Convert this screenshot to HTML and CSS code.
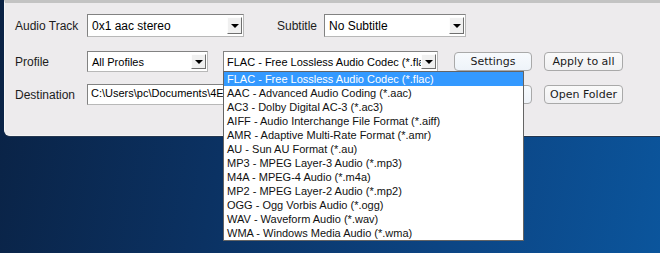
FILE: index.html
```html
<!DOCTYPE html>
<html lang="en">
<head>
  <meta charset="UTF-8">
  <title>Output Settings</title>
  <link rel="stylesheet" href="styles.css">
</head>
<body>

<div class="desktop">
  <div class="window">

    <!-- Audio / subtitle -->
    <div class="row row-first">
      <span class="label">Audio Track</span>
      <div class="combo combo-audio">
        <span class="combo-text">0x1 aac stereo</span>
        <span class="combo-arrow"></span>
      </div>
      <span class="label label-sub">Subtitle</span>
      <div class="combo combo-sub">
        <span class="combo-text">No Subtitle</span>
        <span class="combo-arrow"></span>
      </div>
    </div>

    <!-- Profile -->
    <div class="row row-profile">
      <span class="label">Profile</span>
      <div class="combo combo-small combo-profile">
        <span class="combo-text">All Profiles</span>
        <span class="combo-arrow"></span>
      </div>
      <div class="combo combo-format">
        <span class="combo-text">FLAC - Free Lossless Audio Codec (*.flac)</span>
        <span class="combo-arrow"></span>

        <ul class="dropdown">
          <li class="selected">FLAC - Free Lossless Audio Codec (*.flac)</li>
          <li>AAC - Advanced Audio Coding (*.aac)</li>
          <li>AC3 - Dolby Digital AC-3 (*.ac3)</li>
          <li>AIFF - Audio Interchange File Format (*.aiff)</li>
          <li>AMR - Adaptive Multi-Rate Format (*.amr)</li>
          <li>AU - Sun AU Format (*.au)</li>
          <li>MP3 - MPEG Layer-3 Audio (*.mp3)</li>
          <li>M4A - MPEG-4 Audio (*.m4a)</li>
          <li>MP2 - MPEG Layer-2 Audio (*.mp2)</li>
          <li>OGG - Ogg Vorbis Audio (*.ogg)</li>
          <li>WAV - Waveform Audio (*.wav)</li>
          <li>WMA - Windows Media Audio (*.wma)</li>
        </ul>
      </div>
      <button class="btn btn-settings">Settings</button>
      <button class="btn btn-apply">Apply to all</button>
    </div>

    <!-- Destination -->
    <div class="row row-dest">
      <span class="label">Destination</span>
      <div class="textbox">C:\Users\pc\Documents\4Easysoft Studio\Output</div>
      <button class="btn btn-browse">Browse...</button>
      <button class="btn btn-open">Open Folder</button>
    </div>

  </div>
</div>

</body>
</html>
```

FILE: styles.css
```css
body {
  margin: 0;
  padding: 0;
  font-family: "Liberation Sans", Arial, sans-serif;
}

.desktop {
  width: 660px;
  height: 253px;
  overflow: hidden;
  background: linear-gradient(100deg, #0a2244 0%, #0b3263 35%, #0c4584 70%, #0b559c 100%);
}

.window {
  margin-left: 4px;
  height: 121px;
  padding: 11px 0 0 10px;
  background-color: #edebed;
  border-top: 3px solid #c3c3c3;
  border-left: 1px solid #f7f7f7;
  border-bottom: 1px solid #f5f5f5;
  border-bottom-left-radius: 6px;
  box-shadow: 0 1px 0 #24364f;
}

.row {
  display: flex;
  align-items: center;
}

.row-first {
  height: 23px;
}

.row-profile {
  height: 21px;
  margin-top: 14px;
}

.row-dest {
  height: 21px;
  margin-top: 12px;
}

.label {
  width: 72px;
  font-size: 12px;
  color: #1c1c1c;
}

.label-sub {
  width: 47px;
  margin-left: 33px;
}

/* combo boxes */
.combo {
  position: relative;
  box-sizing: border-box;
  height: 100%;
  display: flex;
  align-items: center;
  background-color: white;
  border: 1px solid #828282;
  border-right-color: #b8b8b8;
  border-bottom-color: #b8b8b8;
  font-size: 12px;
  color: black;
}

.combo-text {
  flex: 1;
  padding-left: 4px;
  white-space: nowrap;
  overflow: hidden;
}

.combo-arrow {
  position: relative;
  box-sizing: border-box;
  width: 15px;
  height: calc(100% - 4px);
  margin-right: 1px;
  background-color: #f0f0f0;
  border: 1px solid #fdfdfd;
  border-right-color: #6f6f6f;
  border-bottom-color: #6f6f6f;
}

.combo-arrow::after {
  content: "";
  position: absolute;
  left: 3px;
  top: 50%;
  margin-top: -2px;
  border-left: 4px solid transparent;
  border-right: 4px solid transparent;
  border-top: 4px solid black;
}

.combo-audio {
  width: 157px;
}

.combo-sub {
  width: 142px;
}

.combo-small {
  font-size: 11px;
}

.combo-profile {
  width: 121px;
}

.combo-format {
  width: 215px;
  margin-left: 15px;
  font-size: 11px;
}

.combo-format .combo-text {
  padding-left: 3px;
  text-overflow: clip;
}

/* open list of the format combo */
.dropdown {
  position: absolute;
  top: 100%;
  left: -1px;
  z-index: 2;
  width: 299px;
  margin: 0;
  padding: 0;
  list-style: none;
  background-color: white;
  border: 1px solid #646464;
  font-size: 11px;
}

.dropdown li {
  height: 14px;
  line-height: 14px;
  padding-left: 3px;
  white-space: nowrap;
  color: #111;
}

.dropdown li.selected {
  background-color: #3399ff;
  color: white;
}

/* text field */
.textbox {
  box-sizing: border-box;
  width: 353px;
  height: 100%;
  padding: 2px 0 0 3px;
  background-color: white;
  border: 1px solid #828282;
  border-right-color: #b8b8b8;
  border-bottom-color: #b8b8b8;
  font-size: 11px;
  white-space: nowrap;
  overflow: hidden;
}

/* buttons */
.btn {
  box-sizing: border-box;
  height: 19px;
  padding: 0;
  font-family: "DejaVu Sans", Verdana, sans-serif;
  font-size: 11px;
  color: #1a1a1a;
  background: linear-gradient(#f7fafd, #eef3f9);
  border: 1px solid #a9a9a9;
  border-radius: 4px;
}

.btn-settings {
  width: 78px;
  margin-left: 16px;
}

.btn-apply {
  width: 79px;
  margin-left: 12px;
  background: linear-gradient(#fafafa, #f0f0f2);
}

.btn-browse {
  width: 78px;
  margin-left: 14px;
}

.btn-open {
  width: 79px;
  margin-left: 12px;
  background: linear-gradient(#fafafa, #f0f0f2);
}
```
